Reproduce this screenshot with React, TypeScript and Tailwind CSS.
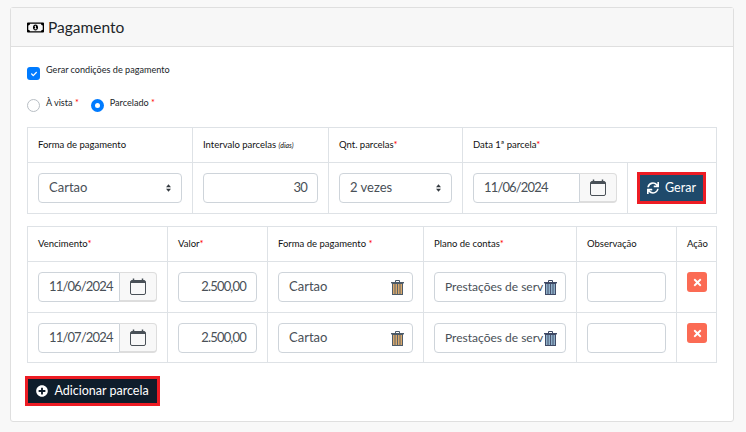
import { FaRegMoneyBillAlt, FaPlusCircle, FaSync, FaTimes, FaCheck } from "react-icons/fa";

const sans = "font-['Lato',sans-serif]";
const inputClass =
  "h-[30px] rounded-[4px] border border-[#ced4da] bg-white text-[13px] text-[#495057] font-['Lato',sans-serif]";
// the digits in the reference are narrower than Lato's
const numClass = "text-[12px] tracking-[-0.8px]";
const dateClass = "text-[11.5px] tracking-[-0.85px]";

function Req() {
  return <span className="text-[#ff0000]">*</span>;
}

function CalendarIcon() {
  return (
    <svg width="16" height="17" viewBox="0 0 16 17" fill="none">
      <rect x="0.5" y="2.5" width="15" height="14" rx="1.5" stroke="#495057" />
      <path d="M1 3h14v2H1z" fill="#495057" />
      <path d="M3.5 0.5v2M12.5 0.5v2" stroke="#495057" strokeWidth="1.5" />
    </svg>
  );
}

function TrashIcon({ fill, line }: { fill: string; line: string }) {
  return (
    <svg width="13" height="15" viewBox="0 0 13 15" className="shrink-0">
      <path d="M4.5 2V0.5h4V2" fill="none" stroke={line} />
      <path d="M0 2h13v1.4H0z" fill={line} />
      <rect x="1.5" y="3.5" width="10" height="11" fill={fill} stroke={line} />
      <path d="M4 4v10M6.5 4v10M9 4v10" stroke={line} strokeWidth="0.9" />
    </svg>
  );
}

function SortArrows() {
  return (
    <svg width="5" height="8" viewBox="0 0 6 9" fill="#343a40">
      <path d="M3 0l3 3.6H0zM3 9L0 5.4h6z" />
    </svg>
  );
}

function DateInput({ value }: { value: string }) {
  return (
    <div className="flex h-[30px] w-full">
      <div className={`${inputClass} ${dateClass} flex min-w-0 flex-1 items-center rounded-r-none pl-[10px]`}>{value}</div>
      <div className="flex w-[37px] items-center justify-center rounded-r-[4px] border border-b-2 border-l-0 border-[#dddddd] bg-[#f8f8f8]">
        <CalendarIcon />
      </div>
    </div>
  );
}

function Select({ value }: { value: string }) {
  return (
    <div className={`${inputClass} flex w-full items-center justify-between pl-[10px] pr-[10px]`}>
      <span>{value}</span>
      <SortArrows />
    </div>
  );
}

function LookupInput({ value, fill, line, small }: { value: string; fill: string; line: string; small?: boolean }) {
  return (
    <div className={`${inputClass} flex w-full items-center justify-between pl-[10px] pr-[8px]`}>
      <span className={small ? "whitespace-nowrap text-[12px]" : "whitespace-nowrap"}>{value}</span>
      <TrashIcon fill={fill} line={line} />
    </div>
  );
}

const th = `border border-[#dee2e6] px-[10px] text-left align-middle text-[9.5px] font-normal text-[#111111] ${sans}`;
const td = "border border-[#dee2e6] px-[10px] align-top pt-[10px]";

function Row({ date, h }: { date: string; h: string }) {
  return (
    <tr className={h}>
      <td className={td}>
        <DateInput value={date} />
      </td>
      <td className={td}>
        <div className={`${inputClass} ${numClass} flex items-center justify-end pr-[10px]`}>2.500,00</div>
      </td>
      <td className={td}>
        <LookupInput value="Cartao" fill="#d9a86c" line="#4d5b68" />
      </td>
      <td className={td}>
        <LookupInput value="Prestações de serv" fill="#8fb0c9" line="#3f4a66" small />
      </td>
      <td className={td}>
        <div className={inputClass} />
      </td>
      <td className={td}>
        <div className="flex h-[20px] w-[20px] items-center justify-center rounded-[3px] bg-[#fb6b54]">
          <FaTimes className="text-[11px] text-white" />
        </div>
      </td>
    </tr>
  );
}

export default function App() {
  return (
    <div className={`h-[432px] w-[746px] overflow-hidden bg-[#f8f8f8] pl-[10px] pr-[12px] pt-[7px] ${sans}`}>
      <div className="h-[415px] rounded-[3px] border border-[#dfdfdf] bg-white">
        <div className="flex h-[39px] items-center gap-[4px] border-b border-[#dfdfdf] bg-[#f7f7f7] pl-[16px] pt-[1px] text-[15.5px] text-[#212529]">
          <FaRegMoneyBillAlt className="text-[17px] text-black" />
          <span>Pagamento</span>
        </div>
        <div className="pl-[16px] pr-[16px]">
          <div className="flex items-start gap-[6px] pt-[16px] text-[9.1px] text-[#212529]">
            <span className="mt-[4px] flex h-[13px] w-[13px] items-center justify-center rounded-[3px] bg-[#007bff]">
              <FaCheck className="text-[6px] text-white" />
            </span>
            <span>Gerar condições de pagamento</span>
          </div>
          <div className="flex items-start pt-[16px] text-[9.1px] text-[#212529]">
            <span className="mt-[3px] h-[13px] w-[13px] rounded-full border border-[#b8bec4] bg-white" />
            <span className="ml-[6px]">
              À vista <Req />
            </span>
            <span className="ml-[12px] mt-[3px] flex h-[13px] w-[13px] items-center justify-center rounded-full bg-[#007bff]">
              <span className="h-[5px] w-[5px] rounded-full bg-white" />
            </span>
            <span className="ml-[6px]">
              Parcelado <Req />
            </span>
          </div>

          <table className="mt-[15px] w-[689px] table-fixed border-collapse">
            <colgroup>
              <col className="w-[165px]" />
              <col className="w-[136px]" />
              <col className="w-[134px]" />
              <col className="w-[165px]" />
              <col className="w-[89px]" />
            </colgroup>
            <thead>
              <tr className="h-[35px]">
                <th className={th}>Forma de pagamento</th>
                <th className={th}>
                  Intervalo parcelas <i className="text-[7px]">(dias)</i>
                </th>
                <th className={th}>
                  Qnt. parcelas<Req />
                </th>
                <th className={th} colSpan={2}>
                  Data 1ª parcela<Req />
                </th>
              </tr>
            </thead>
            <tbody>
              <tr className="h-[51px]">
                <td className={td}>
                  <Select value="Cartao" />
                </td>
                <td className={td}>
                  <div className={`${inputClass} ${numClass} flex items-center justify-end pr-[10px]`}>30</div>
                </td>
                <td className={td}>
                  <Select value="2 vezes" />
                </td>
                <td className={td}>
                  <DateInput value="11/06/2024" />
                </td>
                <td className="border border-[#dee2e6] px-[9px] pt-[9px] align-top">
                  <button className="flex h-[32px] w-[69px] items-center justify-center gap-[6px] border-[3px] border-[#ed1c24] bg-[#1f4a6b] text-[12.5px] text-white">
                    <FaSync className="text-[12px]" />
                    Gerar
                  </button>
                </td>
              </tr>
            </tbody>
          </table>

          <table className="mt-[12px] w-[689px] table-fixed border-collapse">
            <colgroup>
              <col className="w-[140px]" />
              <col className="w-[100px]" />
              <col className="w-[156px]" />
              <col className="w-[153px]" />
              <col className="w-[100px]" />
              <col className="w-[40px]" />
            </colgroup>
            <thead>
              <tr className="h-[35px]">
                <th className={th}>
                  Vencimento<Req />
                </th>
                <th className={th}>
                  Valor<Req />
                </th>
                <th className={th}>
                  Forma de pagamento <Req />
                </th>
                <th className={th}>
                  Plano de contas<Req />
                </th>
                <th className={th}>Observação</th>
                <th className={th}>Ação</th>
              </tr>
            </thead>
            <tbody>
              <Row date="11/06/2024" h="h-[51px]" />
              <Row date="11/07/2024" h="h-[50px]" />
            </tbody>
          </table>

          <button className="ml-[-2px] mt-[13px] flex h-[30px] w-[135px] items-center justify-center gap-[6px] border-[3px] border-[#ed1c24] bg-[#0f1d2b] text-[12.5px] text-white">
            <FaPlusCircle className="text-[12px]" />
            Adicionar parcela
          </button>
        </div>
      </div>
    </div>
  );
}
